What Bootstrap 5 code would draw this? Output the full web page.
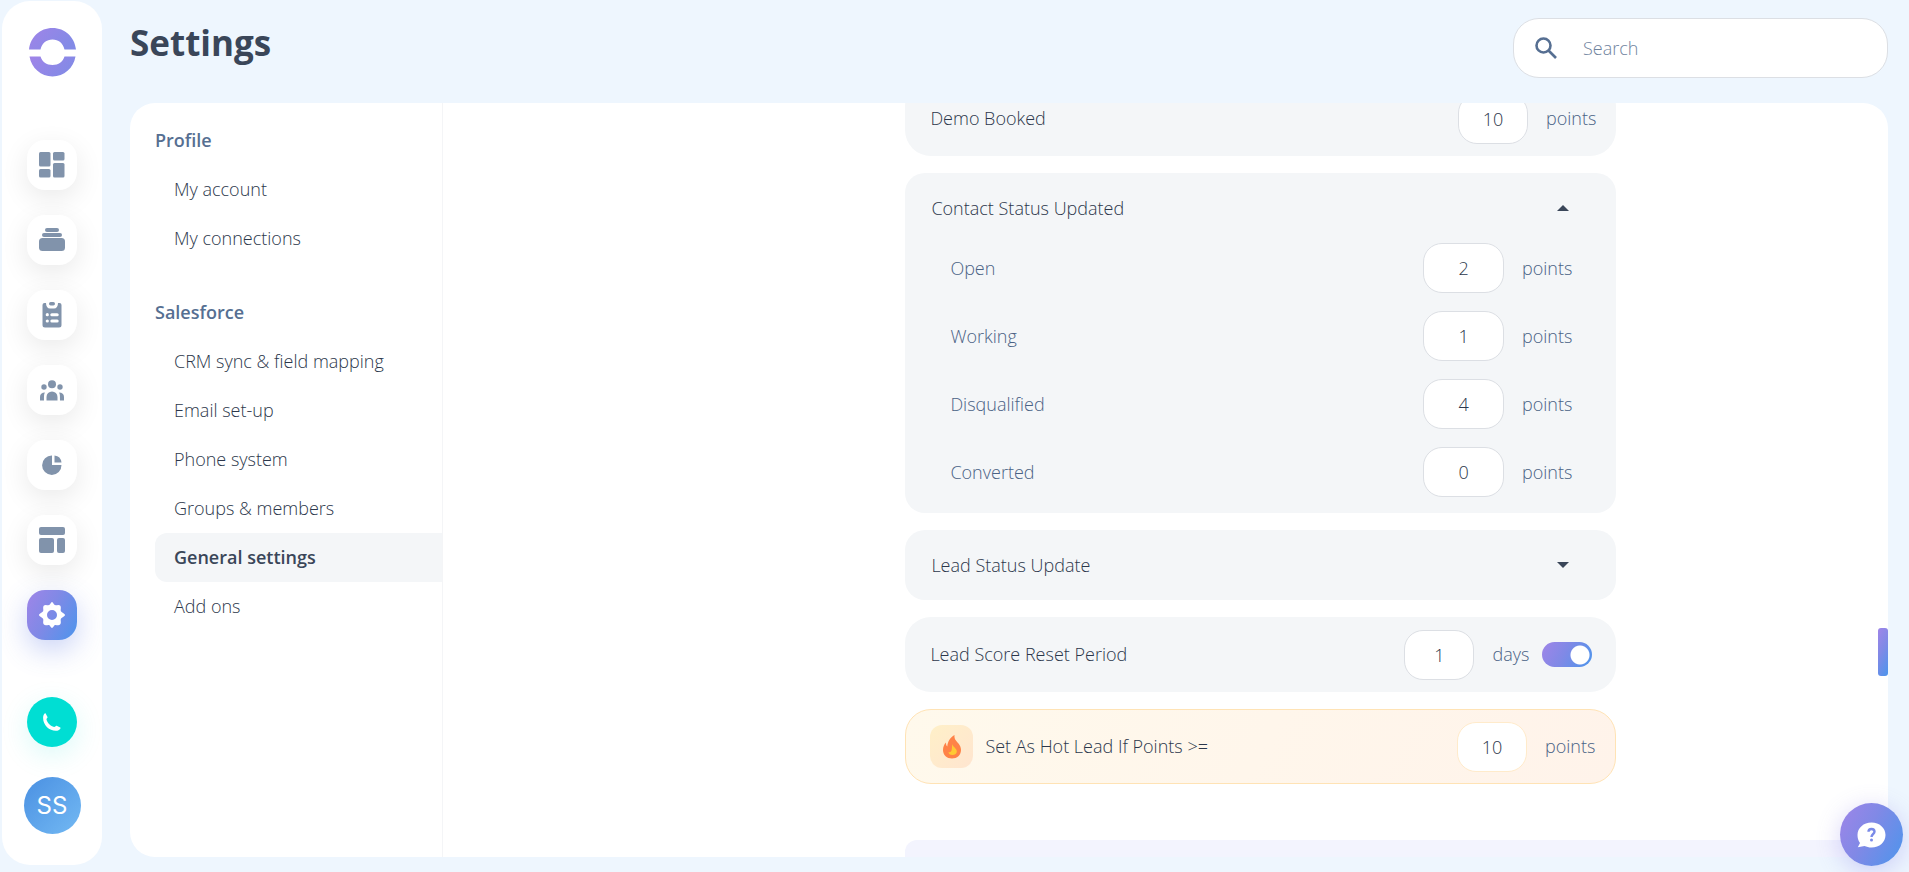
<!DOCTYPE html>
<html lang="en">
<head>
<meta charset="utf-8">
<meta name="viewport" content="width=device-width, initial-scale=1">
<title>Settings</title>
<link href="https://cdn.jsdelivr.net/npm/bootstrap@5.3.0/dist/css/bootstrap.min.css" rel="stylesheet">
<style>
:root{--ink:#3a4659;--text:#2c374b;--slate:#566f92;--unit:#4a6285;--grey:#8193ab;--pane:#f4f6f8;--brand:linear-gradient(118deg,#9f85e8 0%,#8089e6 45%,#4c95ec 100%)}
body{background:#eef6fe;font-family:"Open Sans",sans-serif;font-size:18px;font-weight:300;line-height:25px;color:var(--text)}
.shell{height:100vh;padding:1px 21px 0 2px}
.rail{width:100px;margin-bottom:7px;padding:27px 0 31px;border-radius:28px;background:#fff;overflow:hidden}
.logo-link{margin-bottom:63px;line-height:0}
.rail-list{gap:25px}
.rail-btn{width:50px;height:50px;border-radius:18px;background:#fff;box-shadow:0 8px 28px rgba(0,0,0,.09);position:relative;color:var(--grey)}
.rail-btn.current{background:var(--brand);color:#fff;box-shadow:0 10px 28px rgba(80,110,225,.3)}
.call-btn{width:50px;height:50px;background:#00ded3;box-shadow:0 8px 28px rgba(0,222,211,.15)}
.user-btn{width:57px;height:57px;margin-top:30px;background:linear-gradient(135deg,#4a90e2,#73b9f3);color:#fff;font:24px/24px Inter,sans-serif}
.stage{margin-left:28px;padding-bottom:15px}
.topbar{height:102px;padding-top:17px}
h1{font-size:35px;line-height:50px;font-weight:700;margin:0;color:var(--ink)}
.search-box{width:375px;height:60px;border:1px solid #dcdfe4;border-radius:26px;background:#fff;padding-left:20px;gap:23px}
.search-box input{border:0;outline:0;background:none;font-weight:300;color:var(--text)}
.search-box input::placeholder{color:#6f839e;opacity:1}
.panel{border-radius:25px;background:#fff;overflow:hidden;position:relative}
.side{width:313px;flex:none;border-right:1px solid #f4f5f7;padding:13px 0 0 25px}
.side h2{font-size:18px;line-height:25px;font-weight:600;color:var(--slate);margin:0;padding:12px 0}
.side section+section{margin-top:25px}
.side a{display:block;padding:12px 0 12px 19px;color:var(--text);text-decoration:none;border-radius:12px 0 0 12px}
.side a.current{background:var(--pane);font-weight:600;color:var(--ink)}
.content-pane{height:0;margin-top:-22px;min-width:0}
.stack{width:711px;gap:17px;margin-left:32%}
.tile{background:var(--pane);border-radius:26px;padding:0 20px 0 25px;height:75px}
.fold{background:var(--pane);border-radius:20px}
.fold-head{width:100%;height:70px;border:0;background:none;color:var(--text);font-weight:300;padding:0 47px 0 26px}
.fold-body{padding:0 44px 16px 45px;gap:18px;color:var(--unit)}
.unit{color:var(--unit);margin-left:18px}
.num{width:70px;height:50px;border:1px solid #dcdfe4;border-radius:19px;background:#fff;text-align:center;font-weight:300;color:var(--text);padding:0}
.fold .num{width:81px}
.switch-pill{appearance:none;width:50px;height:25px;border-radius:13px;background:radial-gradient(circle at 38px 13px,#fff 9px,transparent 10px),var(--brand);margin:0 4px 0 13px}
.hot{background:linear-gradient(118deg,#fff9ec,#fff3ea);border:1px solid #ffe3b5;padding:0 20px 0 24px}
.hot .num{border-color:#ffebcb}
.flame{width:43px;height:43px;border-radius:12px;background:linear-gradient(135deg,#fff0c8,#ffe5d0);margin-right:12px}
.next-tile{height:120px;margin:56px 0 0 32%;border-radius:12px;background:#f3f4fe}
.thumb{position:absolute;right:0;top:525px;width:10px;height:48px;border-radius:3px;background:var(--brand)}
.help{position:fixed;right:6px;bottom:6px;width:63px;height:63px;background:var(--brand);box-shadow:0 5px 24px rgba(120,110,230,.3)}
</style>
</head>
<body>
<div class="shell d-flex">
<nav class="rail d-flex flex-column align-items-center flex-shrink-0" aria-label="Main">
  <a href="#" class="logo-link" aria-label="Home"><svg width="47" height="49" viewBox="0 0 47 49"><defs><linearGradient id="lg" x1="0" y1="0" x2="1" y2=".4"><stop stop-color="#a084e8"/><stop offset="1" stop-color="#838ae6"/></linearGradient></defs><path fill="url(#lg)" d="M0 21.500C1.500 9 11 0 23.500 0S45.500 9 47 21.500H35.500C34 15 29.500 11.500 23.500 11.500S13 15 11.500 21.500Z"/><path fill="url(#lg)" d="M.5 28.500H11.500C13 33.500 17.500 37 23.500 37S34 33.500 35.500 28.500H46.500C44.500 40 35 48.500 23.500 48.500S2.500 40 .5 28.500Z"/></svg></a>
  <div class="rail-list d-flex flex-column">
    <button class="rail-btn btn border-0 p-0 d-flex align-items-center justify-content-center" aria-label="Dashboard"><svg width="26" height="26" fill="currentColor"><rect x="0" y="0" width="11.500" height="14.500" rx="1.500"/><rect x="14" y="0" width="11.500" height="8.500" rx="1.500"/><rect x="0" y="17" width="11.500" height="8.500" rx="1.500"/><rect x="14" y="11" width="11.500" height="14.500" rx="1.500"/></svg></button>
    <button class="rail-btn btn border-0 p-0 d-flex align-items-center justify-content-center" aria-label="Queue"><svg width="26" height="24" fill="currentColor"><rect x="6" y="0" width="14" height="4" rx="2"/><rect x="3" y="5" width="20" height="4" rx="2"/><rect x="0" y="10" width="26" height="13" rx="3.500"/></svg></button>
    <button class="rail-btn btn border-0 p-0 d-flex align-items-center justify-content-center" aria-label="Tasks"><svg width="20" height="26" viewBox="0 0 20 26"><path fill="currentColor" d="M2.500 1H4C4 4.500 5.500 6.500 8 6.500h4C14.500 6.500 16 4.500 16 1h1.500A2 2 0 0 1 19.500 3v20a2.500 2.500 0 0 1-2.500 2.500H3A2.500 2.500 0 0 1 .5 23V3A2 2 0 0 1 2.500 1Z"/><rect x="7" y="0" width="6" height="3.500" rx="1.700" fill="currentColor"/><g fill="#fff"><circle cx="5.300" cy="12.700" r="1.600"/><circle cx="5.300" cy="19" r="1.600"/><rect x="8.300" y="11.200" width="8.400" height="3" rx="1.500"/><rect x="8.300" y="17.500" width="8.400" height="3" rx="1.500"/></g></svg></button>
    <button class="rail-btn btn border-0 p-0 d-flex align-items-center justify-content-center" aria-label="Contacts"><svg width="24" height="21" viewBox="0 0 24 21" fill="currentColor"><circle cx="12" cy="4.300" r="4"/><circle cx="4" cy="7" r="2.700"/><circle cx="20" cy="7" r="2.700"/><path d="M6.500 20.500V17a5.500 5.500 0 0 1 11 0v3.500ZM0 20.500V17c0-3 1.800-4.500 5-4.500-1 1.500-1 3-1 8ZM24 20.500V17c0-3-1.800-4.500-5-4.500 1 1.500 1 3 1 8Z"/></svg></button>
    <button class="rail-btn btn border-0 p-0 d-flex align-items-center justify-content-center" aria-label="Reports"><svg width="20" height="20" viewBox="0 0 20 20" fill="currentColor"><path d="M10 .5V10h9.500A9.700 9.700 0 1 1 10 .5Z"/><path d="M12.500.5a8 8 0 0 1 7 7h-7Z"/></svg></button>
    <button class="rail-btn btn border-0 p-0 d-flex align-items-center justify-content-center" aria-label="Templates"><svg width="26" height="26" fill="currentColor"><rect x="0" y="0" width="26" height="8" rx="2"/><rect x="0" y="11" width="15" height="15" rx="2"/><rect x="18" y="11" width="8" height="15" rx="2"/></svg></button>
    <button class="rail-btn current btn border-0 p-0 d-flex align-items-center justify-content-center" aria-label="Settings"><svg width="26" height="26" viewBox="0 0 26 26"><path fill="#fff" fill-rule="evenodd" d="M13 0c1.200 0 1.700 2.700 2.900 3.100 1.300.5 3.700-1 5.200.4s.2 4 .7 5.600C22.300 10.500 26 11.700 26 13s-3.700 2.500-4.200 3.900c-.5 1.600.8 4.200-.7 5.600s-3.900.1-5.200.5C14.700 23.500 14.200 26 13 26s-1.700-2.500-2.900-3c-1.300-.4-3.700.9-5.200-.5s-.2-4-.7-5.600C3.700 15.500 0 14.300 0 13s3.700-2.500 4.200-3.900c.5-1.600-.8-4.200.7-5.600s3.900.1 5.200-.4C11.300 2.700 11.800 0 13 0ZM13 8a5 5 0 1 0 0 10 5 5 0 0 0 0-10Z"/></svg></button>
  </div>
  <button class="call-btn btn border-0 rounded-circle p-0 d-flex align-items-center justify-content-center mt-auto" aria-label="Call"><svg width="18" height="18" viewBox="0 0 18 18"><path fill="#fff" d="M2.500.3 4.500 4c.3.600-1.200 1.600-1 2.500.8 3.300 4.200 6.800 7.600 7.400.9.200 1.700-1.500 2.500-1.200l3.700 1.800c.9.500-.8 2.800-3 3.200C7 18.700-.8 12 .2 3.500.5 1.500 1.900-.4 2.500.3Z"/></svg></button>
  <button class="user-btn btn border-0 rounded-circle p-0">SS</button>
</nav>
<div class="stage d-flex flex-column flex-grow-1">
  <header class="topbar d-flex justify-content-between align-items-start flex-shrink-0">
    <h1>Settings</h1>
    <label class="search-box d-flex align-items-center"><svg width="24" height="24" viewBox="0 0 24 24" fill="none" stroke="#566f92" stroke-width="2.600"><circle cx="9.500" cy="9.500" r="7"/><path d="m14.500 14.500 7.500 7.500"/></svg><input type="search" placeholder="Search" aria-label="Search"></label>
  </header>
  <main class="panel d-flex flex-grow-1">
    <nav class="side" aria-label="Settings">
      <section><h2>Profile</h2><a href="#">My account</a><a href="#">My connections</a></section>
      <section><h2>Salesforce</h2><a href="#">CRM sync &amp; field mapping</a><a href="#">Email set-up</a><a href="#">Phone system</a><a href="#">Groups &amp; members</a><a href="#" class="current" aria-current="page">General settings</a><a href="#">Add ons</a></section>
    </nav>
    <div class="content-pane flex-grow-1">
      <div class="stack d-flex flex-column">
        <div class="tile d-flex align-items-center"><label for="demo" class="me-auto">Demo Booked</label><input id="demo" class="num" value="10"><span class="unit">points</span></div>
        <section class="fold">
          <button class="fold-head d-flex align-items-center justify-content-between" aria-expanded="true">Contact Status Updated<svg width="12" height="6"><path fill="#3a4659" d="M0 6 6 0l6 6Z"/></svg></button>
          <div class="fold-body d-flex flex-column">
            <div class="d-flex align-items-center"><label for="open" class="me-auto">Open</label><input id="open" class="num" value="2"><span class="unit">points</span></div>
            <div class="d-flex align-items-center"><label for="working" class="me-auto">Working</label><input id="working" class="num" value="1"><span class="unit">points</span></div>
            <div class="d-flex align-items-center"><label for="disq" class="me-auto">Disqualified</label><input id="disq" class="num" value="4"><span class="unit">points</span></div>
            <div class="d-flex align-items-center"><label for="conv" class="me-auto">Converted</label><input id="conv" class="num" value="0"><span class="unit">points</span></div>
          </div>
        </section>
        <section class="fold"><button class="fold-head d-flex align-items-center justify-content-between" aria-expanded="false">Lead Status Update<svg width="12" height="6"><path fill="#3a4659" d="M0 0h12L6 6Z"/></svg></button></section>
        <div class="tile d-flex align-items-center"><label for="reset" class="me-auto">Lead Score Reset Period</label><input id="reset" class="num" value="1"><span class="unit">days</span><input type="checkbox" role="switch" class="switch-pill" checked aria-label="Lead score reset"></div>
        <div class="tile hot d-flex align-items-center"><span class="flame d-flex align-items-center justify-content-center"><svg width="18" height="24" viewBox="0 0 18 24"><path fill="#ff8247" d="M11.500 0c-.5 4 1.500 5.500 4 8.500 1.500 2 2.500 4 2.500 6.500 0 5-4 8.500-9 8.500s-9-3.500-9-8.500c0-3 1-5.500 3-7.500 0 2 .3 3.200 1.300 4C4.500 7 7 2.500 11.500 0Z"/><path fill="#ffc933" d="M9.500 9c0 3 4.300 4 4.300 7.500 0 2-1.800 3.500-4.300 3.500s-4-1.300-4-3c1.500.5 2.500 0 3-1.500.7-2 .2-4 1-6.500Z"/></svg></span><label for="hot" class="me-auto">Set As Hot Lead If Points &gt;=</label><input id="hot" class="num" value="10"><span class="unit">points</span></div>
      </div>
      <section class="next-tile" aria-label="Next section"></section>
    </div>
    <div class="thumb"></div>
  </main>
</div>
</div>
<button class="help btn border-0 rounded-circle p-0 d-flex align-items-center justify-content-center" aria-label="Help"><svg width="29" height="26" viewBox="0 0 29 26"><path fill="#fff" d="M14.500.5C22.500.5 28.500 6 28.500 13s-6 12.500-14 12.500c-2.500 0-5-.6-7-1.500L.8 25.300 3 21C1.300 18.700.5 16 .5 13 .5 6 6.500.5 14.500.5Z"/><path fill="none" stroke="#7a8ae8" stroke-width="2.400" d="M11.500 9.800c0-3.700 6-3.700 6 0 0 2.200-3 2.300-3 5.200"/><circle cx="14.500" cy="18" r="1.500" fill="#7a8ae8"/></svg></button>
<script src="https://cdn.jsdelivr.net/npm/bootstrap@5.3.0/dist/js/bootstrap.bundle.min.js"></script>
</body>
</html>
